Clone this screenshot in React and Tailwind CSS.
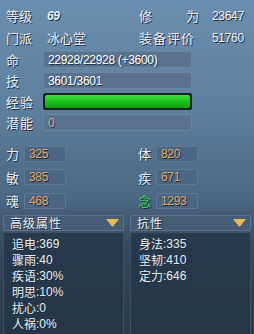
const cjk = { fontFamily: '"Noto Sans CJK SC", "Noto Sans", sans-serif' };

const left = ["追电:369", "骤雨:40", "疾语:30%", "明思:10%", "扰心:0", "人祸:0%"];
const right = ["身法:335", "坚韧:410", "定力:646"];

function Triangle() {
  return (
    <svg width="13" height="8" viewBox="0 0 13 8">
      <path d="M0 0 H13 L6.5 8 Z" fill="#e9b95c" />
    </svg>
  );
}

function StatBox({ value }) {
  return (
    <div className="w-[42px] h-[16px] rounded-[2px] bg-[#4b6683] border border-[#5d7995] flex items-center pl-[4px] text-[12px] text-[#e3a566] tracking-tight [text-shadow:1px_1px_0_#1c2836]" style={{ fontFamily: '"Liberation Sans", sans-serif' }}>
      {value}
    </div>
  );
}

function Stat({ label, value, green }) {
  return (
    <div className="flex items-center h-[23.5px]">
      <span className={`w-[24px] pl-[6px] text-[13px] ${green ? "text-[#2fd24a]" : "text-[#e8eef4]"}`} style={cjk}>{label}</span>
      <StatBox value={value} />
    </div>
  );
}

function Bar({ label, children, green }) {
  return (
    <div className="flex items-center h-[21px]">
      <span className="w-[43px] pl-[6px] text-[13px] text-[#e8eef4] tracking-[1px]" style={cjk}>{label}</span>
      {green ? (
        <div className="w-[149px] h-[17px] rounded-[2px] bg-[#16261c] p-[2px]">
          <div className="h-full rounded-[2px] bg-[linear-gradient(#3ee23e,#19c219_50%,#12a012)]" />
        </div>
      ) : (
        <div className="w-[149px] h-[17px] rounded-[2px] bg-[#58728f] border border-[#6a86a2] flex items-center pl-[4px] text-[12px] text-white tracking-tight [text-shadow:1px_1px_0_#24344a]" style={{ fontFamily: '"Liberation Sans", sans-serif' }}>
          {children}
        </div>
      )}
    </div>
  );
}

export default function App() {
  const num = { fontFamily: '"Liberation Sans", sans-serif' };
  return (
    <div className="w-[254px] h-[334px] overflow-hidden bg-[linear-gradient(#6b8fb0,#5d7d9c_35%,#4a6682_60%,#34485d_75%,#2a3a4c)] text-[#e8eef4] [text-shadow:1px_1px_0_#1f2d3d] select-none">
      <div className="flex pt-[5px] h-[49px]">
        <div className="w-[133px]">
          <div className="flex items-center h-[22px]">
            <span className="w-[47px] pl-[6px] text-[13px]" style={cjk}>等级</span>
            <span className="text-[12px] font-bold italic tracking-tight" style={num}>69</span>
          </div>
          <div className="flex items-center h-[22px]">
            <span className="w-[47px] pl-[6px] text-[13px]" style={cjk}>门派</span>
            <span className="text-[13px]" style={cjk}>冰心堂</span>
          </div>
        </div>
        <div className="flex-1 pl-[6px]">
          <div className="flex items-center h-[22px]">
            <span className="w-[73px] flex justify-between pr-[13px] text-[13px]" style={cjk}><span>修</span><span>为</span></span>
            <span className="text-[12px] tracking-tight" style={num}>23647</span>
          </div>
          <div className="flex items-center h-[22px]">
            <span className="w-[73px] text-[13px] tracking-[1px]" style={cjk}>装备评价</span>
            <span className="text-[12px] tracking-tight" style={num}>51760</span>
          </div>
        </div>
      </div>

      <div className="flex flex-col">
        <Bar label="命">22928/22928 (+3600)</Bar>
        <Bar label="技">3601/3601</Bar>
        <Bar label="经验" green />
        <Bar label="潜能"><span className="text-[#d8b080]">0</span></Bar>
      </div>

      <div className="flex pt-[9px]">
        <div className="w-[128px] flex flex-col">
          <Stat label="力" value="325" />
          <Stat label="敏" value="385" />
          <Stat label="魂" value="468" />
        </div>
        <div className="flex flex-col pl-[4px]">
          <Stat label="体" value="820" />
          <Stat label="疾" value="671" />
          <Stat label="念" value="1293" green />
        </div>
      </div>

      <div className="flex gap-[6px] px-[3px] pt-[2.5px]">
        {[["高级属性", left], ["抗性", right]].map(([title, rows]) => (
          <div key={title} className="flex-1 flex flex-col">
            <div className="h-[16px] flex items-center justify-between bg-[#465d76] border border-[#5a728b] rounded-[1px] pl-[6px] pr-[4px] text-[12px] tracking-[1px]" style={cjk}>
              <span>{title}</span>
              <Triangle />
            </div>
            <div className="mt-[1px] h-[110px] bg-[#25364a]/85 border border-[#3d5064] rounded-[2px] pt-[3px] pl-[8px] flex flex-col">
              {rows.map((r) => {
                const [k, v] = r.split(":");
                return (
                  <div key={r} className="h-[16px] flex items-center text-[12px] leading-none">
                    <span style={cjk}>{k}</span>
                    <span style={num}>:{v}</span>
                  </div>
                );
              })}
            </div>
          </div>
        ))}
      </div>
    </div>
  );
}
